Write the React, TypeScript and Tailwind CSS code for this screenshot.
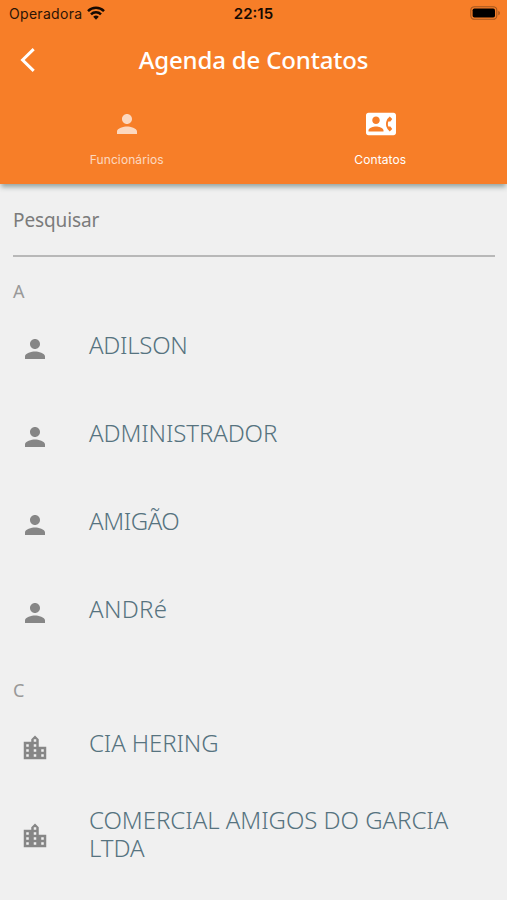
import { useState } from "react";
import { MdContactPhone, MdLocationCity, MdPerson } from "react-icons/md";
import clsx from "clsx";

type Contact = {
  name: string;
  company?: boolean;
  className?: string;
};

const groups: { letter: string; contacts: Contact[] }[] = [
  {
    letter: "A",
    contacts: [
      { name: "ADILSON", className: "-mt-[9px] tracking-[-0.28px]" },
      { name: "ADMINISTRADOR", className: "-mt-[9px] tracking-[-0.12px]" },
      { name: "AMIGÃO", className: "-mt-[9px] tracking-[-0.42px]" },
      { name: "ANDRé", className: "-mt-[9px] tracking-[0.3px]" },
    ],
  },
  {
    letter: "C",
    contacts: [
      { name: "CIA HERING", company: true, className: "-mt-[10px] tracking-[-0.12px]" },
      {
        name: "COMERCIAL AMIGOS DO GARCIA LTDA",
        company: true,
        className: "-mt-[4px] tracking-[-0.04px]",
      },
    ],
  },
];

const tabs = [
  { id: "funcionarios", label: "Funcionários", Icon: MdPerson },
  { id: "contatos", label: "Contatos", Icon: MdContactPhone },
];

const StatusBar = () => (
  <div className="grid h-7 grid-cols-3 items-center pl-[9px] pr-[6px] font-['Inter',sans-serif] text-[14px] text-[#2b1405]">
    <div className="flex items-center gap-[5px]">
      <span className="-mt-px tracking-[0.3px]">Operadora</span>
      <svg className="-mt-[2px]" width="18" height="14" viewBox="0 0 18 14" fill="none" stroke="#160a02" strokeWidth="2.5">
        <path d="M1 5.1a11.4 11.4 0 0 1 16 0" />
        <path d="M4 8.3a7.1 7.1 0 0 1 10 0" />
        <path d="M9 13.8l-2.8-3a4 4 0 0 1 5.6 0z" fill="#160a02" stroke="none" />
      </svg>
    </div>
    <span className="mt-px mr-[3px] text-center text-[15px] font-semibold text-[#160a02]">22:15</span>
    <svg className="-mt-[2px] justify-self-end" width="31" height="14" viewBox="0 0 31 14">
      <rect x="0.8" y="0.7" width="26" height="12.6" rx="3.6" fill="none" stroke="#a4571f" strokeWidth="1.1" />
      <rect x="2.6" y="2.5" width="22.4" height="9" rx="1.8" fill="#000" />
      <path d="M28.3 4.7v4.6c1-.4 1.6-1.3 1.6-2.3s-.6-1.9-1.6-2.3z" fill="#a4571f" />
    </svg>
  </div>
);

const ContactRow = ({ name, company, className }: Contact) => {
  const Icon = company ? MdLocationCity : MdPerson;

  return (
    <li className="flex h-22 items-center">
      <Icon className="ml-5 size-[30px] shrink-0 text-[#868686]" />
      <span
        className={clsx("ml-[39px] mr-10 text-[24px] leading-7 font-light text-[#56737f]", className)}
      >
        {name}
      </span>
    </li>
  );
};

export default function App() {
  const [activeTab, setActiveTab] = useState("contatos");
  const [search, setSearch] = useState("");

  return (
    <div className="h-[900px] w-full overflow-hidden bg-[#f0f0f0] font-['Noto_Sans',sans-serif]">
      <header className="relative h-[184px] bg-[#f77e28] shadow-[0_4px_5px_-1px_rgba(40,70,60,0.45)]">
        <StatusBar />
        <div className="grid h-16 grid-cols-[60px_1fr_60px] items-center">
          <button aria-label="Voltar" className="ml-[20px] w-4">
            <svg width="16" height="24" viewBox="0 0 16 24" fill="none" stroke="#fff" strokeWidth="3">
              <path d="M13.7 1.2L2.6 12l11.1 10.8" />
            </svg>
          </button>
          <h1 className="text-center text-[24px] font-medium tracking-[-0.17px] text-white">Agenda de Contatos</h1>
        </div>
        <nav className="grid grid-cols-2">
          {tabs.map(({ id, label, Icon }) => (
            <button
              key={id}
              onClick={() => setActiveTab(id)}
              className={clsx(
                "flex h-[92px] flex-col items-center pt-[17px] font-['Inter',sans-serif] text-[12px] text-white",
                activeTab !== id && "opacity-70"
              )}
            >
              <Icon className="ml-px size-[30px]" />
              <span className="mt-[12px] leading-[18px] tracking-[0.1px]">{label}</span>
            </button>
          ))}
        </nav>
      </header>

      <div className="ml-[13px] mr-3 h-[73px] border-b-2 border-[#b8b8b8]">
        <input
          value={search}
          onChange={(e) => setSearch(e.target.value)}
          placeholder="Pesquisar"
          className="mt-[20px] h-8 w-full bg-transparent text-[19px] tracking-[-0.1px] text-[#666] outline-none placeholder:text-[#7b7b7b]"
        />
      </div>

      {groups.map(({ letter, contacts }) => (
        <section key={letter} className="pt-4 not-first-of-type:pt-[15px]">
          <h2 className="h-8 pl-[13px] text-[18px] leading-9 text-[#999]">{letter}</h2>
          <ul>
            {contacts
              .filter(({ name }) => name.toLowerCase().includes(search.toLowerCase()))
              .map((contact) => (
                <ContactRow key={contact.name} {...contact} />
              ))}
          </ul>
        </section>
      ))}
    </div>
  );
}
